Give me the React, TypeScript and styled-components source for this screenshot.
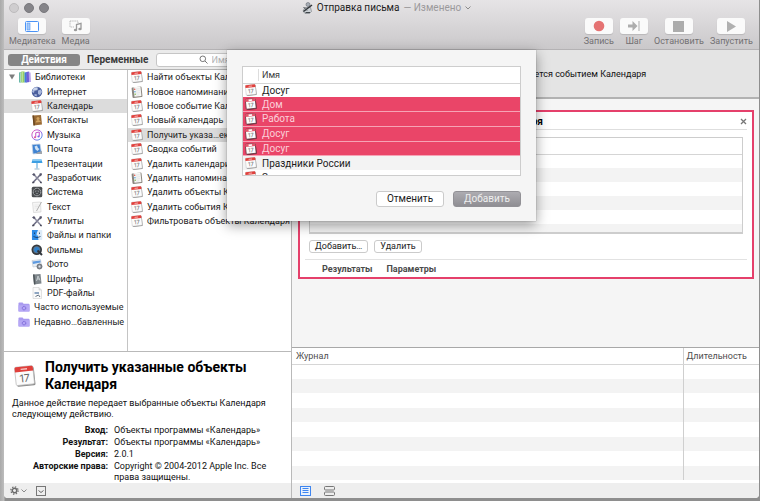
import React from "react";
import styled, { createGlobalStyle, css } from "styled-components";

const GlobalStyle = createGlobalStyle`
  * { box-sizing: border-box; }
  html, body, #root { height: 100%; }
  body {
    margin: 0;
    background: linear-gradient(90deg, #a9a9a9, #bdbdbd 4px, #8e8e8e 5px);
    font-family: Roboto, "Noto Sans", sans-serif;
    font-size: 9px;
    color: #1c1c1c;
    overflow: hidden;
  }
  button, input { font: inherit; color: inherit; }
  button { border: 0; padding: 0; background: none; }
  ul, dl, dd, h1, h2, p { margin: 0; padding: 0; }
  ul { list-style: none; }
  table { border-collapse: collapse; width: 100%; }
  th, td { padding: 0; text-align: left; font-weight: 400; }
  svg { display: block; flex: none; }
`;

const Window = styled.div`
  position: relative;
  display: flex;
  flex-direction: column;
  height: calc(100vh - 3px);
  margin: 0 1px 0 4px;
  overflow: hidden;
  background: #fff;
  border-radius: 0 0 4px 4px;
`;

const Header = styled.header`
  display: flex;
  flex-direction: column;
  height: 50px;
  flex: none;
  background: linear-gradient(#e6e4e6, #cac8ca);
  border-bottom: 1px solid #b4b2b4;
`;

const TitleBar = styled.div`
  display: grid;
  grid-template-columns: 1fr auto 1fr;
  align-items: center;
  height: 15px;
  padding-left: 5px;
`;

const Lights = styled.div`
  display: flex;
  gap: 5px;
`;

const Light = styled.button<{ $dim?: boolean }>`
  width: 10px;
  height: 10px;
  border-radius: 50%;
  background: ${(p) => (p.$dim ? "#cfcdcf" : "#858489")};
  border: 1px solid ${(p) => (p.$dim ? "#bdbbbd" : "#7a797e")};
`;

const Title = styled.h1`
  display: flex;
  align-items: center;
  gap: 4px;
  padding-left: 5px;
  font-size: 10px;
  font-weight: 400;
  line-height: 14px;
  white-space: nowrap;
  span { color: #9b999b; }
`;

const Toolbar = styled.div`
  display: flex;
  justify-content: space-between;
  padding: 3px 6px 0 5px;
`;

const ToolGroup = styled.div`
  display: flex;
  gap: 6px;
`;

const Tool = styled.button`
  display: flex;
  flex-direction: column;
  align-items: center;
  gap: 2px;
  font-size: 9px;
  line-height: 10px;
  color: #727072;
`;

const ToolFace = styled.span`
  display: flex;
  align-items: center;
  justify-content: center;
  width: 28px;
  height: 16px;
  border-radius: 3px;
  background: #fafafa;
  box-shadow: 0 1px 1px rgba(0, 0, 0, 0.12);
`;

const Main = styled.main`
  display: grid;
  grid-template-columns: 288px 1fr;
  flex: 1;
  min-height: 0;
`;

const Side = styled.aside`
  display: flex;
  flex-direction: column;
  min-height: 0;
  min-width: 0;
  border-right: 1px solid #b9b9b9;
`;

const Tabs = styled.div`
  display: flex;
  align-items: center;
  gap: 7px;
  height: 20px;
  padding: 0 4px;
  background: #ebebeb;
  border-bottom: 1px solid #b4b4b4;
`;

const Tab = styled.button<{ $active?: boolean }>`
  height: 12px;
  line-height: 12px;
  font-size: 10px;
  font-weight: 700;
  color: #3a3a3a;
  ${(p) =>
    p.$active &&
    css`
      width: 72px;
      border-radius: 3px;
      background: #868686;
      color: #fff;
    `}
`;

const Search = styled.label`
  display: flex;
  flex: 1;
  align-items: center;
  gap: 4px;
  min-width: 0;
  height: 14px;
  padding-left: 42px;
  background: #fff;
  border: 1px solid #c6c6c6;
  border-radius: 3px;
  input {
    width: 100%;
    min-width: 0;
    border: 0;
    padding: 0;
    background: none;
    outline: 0;
  }
  input::placeholder { color: #b5b5b5; }
`;

const Lists = styled.div`
  display: grid;
  grid-template-columns: 124px 1fr;
  flex: 1;
  min-height: 0;
`;

const List = styled.ul<{ $divider?: boolean }>`
  display: grid;
  grid-template-rows: repeat(18, 1fr);
  min-height: 0;
  min-width: 0;
  padding-bottom: 22px;
  border-right: ${(p) => (p.$divider ? "1px solid #c4c4c4" : "0")};
`;

const Item = styled.button<{ $indent: number; $selected?: boolean }>`
  display: flex;
  align-items: center;
  gap: 4px;
  width: 100%;
  height: 100%;
  padding-left: ${(p) => p.$indent}px;
  background: ${(p) => (p.$selected ? "#dcdcdc" : "none")};
  white-space: nowrap;
  text-align: left;
`;

const Info = styled.section`
  display: flex;
  flex-direction: column;
  gap: 5px;
  padding: 7px 8px 0;
  border-top: 1px solid #b9b9b9;
  line-height: 11px;
  color: #111;
`;

const InfoHead = styled.div`
  display: flex;
  align-items: center;
  gap: 9px;
  padding-left: 2px;
  h2 {
    font-size: 14px;
    line-height: 17px;
    font-weight: 700;
    color: #000;
  }
`;

const Facts = styled.dl`
  display: grid;
  grid-template-columns: 96px 1fr;
  column-gap: 6px;
  row-gap: 1px;
  dt {
    text-align: right;
    font-weight: 700;
    white-space: nowrap;
  }
`;

const BottomBar = styled.footer<{ $wide?: boolean }>`
  display: flex;
  align-items: center;
  gap: ${(p) => (p.$wide ? 13 : 9)}px;
  height: 15px;
  flex: none;
  padding-left: ${(p) => (p.$wide ? 8 : 6)}px;
  background: #eee;
`;

const IconButton = styled.button`
  display: flex;
  align-items: center;
  gap: 2px;
`;

const Work = styled.section`
  display: flex;
  flex-direction: column;
  min-width: 0;
  min-height: 0;
`;

const Trigger = styled.p`
  flex: none;
  height: 49px;
  line-height: 48px;
  text-align: center;
  background: #e4e4e4;
  border-bottom: 2px solid #b2b2b2;
  color: #111;
`;

const Canvas = styled.div`
  flex: 1;
  min-height: 0;
  padding: 11px 5px 0 6px;
  background: #f5f5f5;
`;

const Card = styled.article`
  display: flex;
  flex-direction: column;
  border: 2px solid #e5406b;
  background: #fff;
`;

const CardHead = styled.div`
  display: flex;
  align-items: center;
  gap: 7px;
  height: 18px;
  margin: 0 5px;
  padding: 2px 0 0 8px;
  border-bottom: 1px solid #dedede;
  h2 {
    flex: 1;
    font-size: 10px;
    font-weight: 700;
    color: #000;
  }
`;

const CardTable = styled.div`
  height: 97px;
  margin: 7px 9px 0;
  overflow: hidden;
  border: 1px solid #cdcdcd;
  border-bottom-width: 2px;
  th { height: 16px; border-bottom: 1px solid #d5d5d5; }
  td { height: 14px; }
  tbody tr:nth-child(even) { background: #f3f3f3; }
`;

const CardActions = styled.div`
  display: flex;
  gap: 6px;
  padding: 6px 9px;
`;

const SmallButton = styled.button`
  height: 13px;
  padding: 0 5px;
  line-height: 11px;
  background: #fff;
  border: 1px solid #cbcbcb;
  border-radius: 3px;
`;

const CardTabs = styled.div`
  display: flex;
  gap: 14px;
  height: 18px;
  margin: 0 5px;
  padding-left: 17px;
  border-top: 1px solid #e2e2e2;
  button {
    font-weight: 700;
    color: #4a4a4a;
  }
`;

const Log = styled.div`
  display: flex;
  flex: none;
  height: 136px;
  padding-bottom: 3px;
  border-top: 1px solid #a8a8a8;
  table { height: 100%; }
  th { height: 16px; padding: 0 4px; color: #4e4e4e; border-bottom: 1px solid #d6d6d6; }
  td { height: 14px; }
  th + th, td + td { width: 76px; padding: 0 0 0 3px; border-left: 1px solid #cfcfcf; }
  tbody tr:nth-child(even) { background: #f3f3f3; }
`;

const Sheet = styled.div`
  position: absolute;
  top: 50px;
  left: 0;
  right: 0;
  width: 309px;
  margin: 0 auto;
  padding: 16px 15px 14px;
  background: #f5f5f5;
  box-shadow: 0 4px 12px rgba(0, 0, 0, 0.4), 0 0 1px rgba(0, 0, 0, 0.4);
`;

const Picker = styled.div`
  height: 110px;
  overflow: hidden;
  background: #fff;
  border: 1px solid #cdcdcd;
  table { height: 117px; }
  th { height: 16px; color: #3c3c3c; border-bottom: 1px solid #d5d5d5; }
  th:first-child { width: 16px; }
  th + th { padding-left: 3px; }
  td:first-child { padding-left: 2px; }
  td + td { padding-left: 3px; font-size: 10px; line-height: 13px; }
  th:first-child { background: linear-gradient(#ddd, #ddd) right center / 1px 12px no-repeat; }
`;

const PickRow = styled.tr<{ $selected?: boolean; $striped?: boolean }>`
  background: ${(p) => (p.$selected ? "#ea4568" : p.$striped ? "#f3f3f3" : "#fff")};
  color: ${(p) => (p.$selected ? "#fbd0da" : "#1c1c1c")};
  td { border-bottom: ${(p) => (p.$selected ? "1px solid #f6a3b5" : "0")}; }
`;

const SheetActions = styled.div`
  display: flex;
  justify-content: flex-end;
  gap: 9px;
  padding-top: 15px;
`;

const PushButton = styled.button<{ $primary?: boolean }>`
  width: 68px;
  height: 16px;
  border: 1px solid ${(p) => (p.$primary ? "#929196" : "#cbcbcb")};
  border-radius: 3px;
  background: ${(p) => (p.$primary ? "linear-gradient(#adacb1, #8f8e93)" : "#fff")};
  color: ${(p) => (p.$primary ? "#eee" : "#1c1c1c")};
  font-size: 10px;
  line-height: 14px;
`;

type IconProps = { size?: number; highlighted?: boolean };

const Calendar = ({ size = 12, highlighted }: IconProps) => (
  <svg width={size} height={size} viewBox="0 0 24 24" aria-hidden="true">
    <g transform="rotate(-6 12 12)">
      <rect x="2.5" y="3" width="20" height="20" rx="1.5" fill={highlighted ? "#5e2a36" : "#8d8d8d"} />
      <rect x="1.5" y="1.5" width="20" height="20" rx="1.5" fill="#fcfcfc" stroke={highlighted ? "#6b3340" : "#b9b9b9"} strokeWidth={highlighted ? 1.6 : 0.8} />
      <path d="M1.5 3q0-1.500 1.500-1.500h17q1.500 0 1.500 1.500v4h-20z" fill={highlighted ? "#e2566a" : "#e0403c"} />
      <path d="M8 4.300h7" stroke={highlighted ? "#fff" : "#f7c6c4"} strokeWidth={highlighted ? 3.4 : 1.6} />
      <text x="11.500" y="18.500" textAnchor="middle" fontFamily="Inter" fontSize="11.500" fill="#666">17</text>
    </g>
  </svg>
);

const Reminder = () => (
  <svg width="12" height="12" viewBox="0 0 24 24" aria-hidden="true">
    <g transform="rotate(-6 12 12)">
      <rect x="2" y="2" width="20" height="21" rx="2" fill="#8b867f" />
      <rect x="6" y="2" width="14" height="19" fill="#f7f7f5" />
      <path d="M10 6h8M10 10h8M10 14h8M10 18h6" stroke="#cfd3d6" />
      <circle cx="8" cy="6" r="1.500" fill="#e0524a" />
      <circle cx="8" cy="11" r="1.500" fill="#4f9ad8" />
      <circle cx="8" cy="16" r="1.500" fill="#77b84b" />
    </g>
  </svg>
);

const Books = () => (
  <svg width="12" height="12" viewBox="0 0 26 24" preserveAspectRatio="none" aria-hidden="true">
    <path d="M0 3l5-1v21H0z" fill="#5fb2a5" />
    <path d="M5 1h7v22H5z" fill="#8ccb52" />
    <path d="M12 3l5-1v21h-5z" fill="#3f7fd6" />
    <path d="M16 2l6-1 1 21-7 1z" fill="#6f5fd6" />
    <path d="M21 3h4l1 19h-4z" fill="#b9a5ea" />
    <path d="M3 3v19M8 2v20" stroke="#d6f0c9" strokeWidth="1.500" />
  </svg>
);

const Globe = () => (
  <svg width="12" height="12" viewBox="0 0 24 24" aria-hidden="true">
    <circle cx="12" cy="12" r="10.500" fill="#4b5f9d" />
    <path d="M4 6q5-5 10-3l-3 5-4 1-1 5-4-2zM14 9l6-2 2 5-4 6-4-2zM7 16l5 1-1 4-4-2z" fill="#a9b8dc" />
    <ellipse cx="9" cy="6" rx="5" ry="3" fill="#dfe6f5" opacity=".6" />
  </svg>
);

const Contacts = () => (
  <svg width="12" height="12" viewBox="0 0 24 24" aria-hidden="true">
    <path d="M3 3l17-1 2 19-17 2z" fill="#9a6b35" />
    <path d="M3 3l3 0 2 19.500-3 .5z" fill="#6b4720" />
    <circle cx="14" cy="9" r="3" fill="#d2a25e" />
    <path d="M9 17q1-5 5-5t6 4z" fill="#d2a25e" />
  </svg>
);

const Music = () => (
  <svg width="12" height="12" viewBox="0 0 24 24" aria-hidden="true">
    <defs>
      <linearGradient id="ring" x1="0" y1="0" x2="1" y2="1">
        <stop offset="0" stopColor="#e85ab0" />
        <stop offset=".5" stopColor="#a15be0" />
        <stop offset="1" stopColor="#3fa4f0" />
      </linearGradient>
    </defs>
    <circle cx="12" cy="12" r="10.300" fill="#fff" stroke="url(#ring)" strokeWidth="2" />
    <path d="M9.500 16.500V7.500l7-1.500v9" fill="none" stroke="#c352c9" strokeWidth="2" />
    <ellipse cx="8" cy="16.500" rx="2.200" ry="1.800" fill="#e0569c" />
    <ellipse cx="15" cy="15" rx="2.200" ry="1.800" fill="#7b62e8" />
  </svg>
);

const Mail = () => (
  <svg width="12" height="12" viewBox="0 0 24 24" aria-hidden="true">
    <path d="M2 3l16-1 3 18-17 2z" fill="#3f83d2" stroke="#c9d6e4" strokeWidth="1.500" />
    <path d="M7 7l5-2 2 5 3 2-4 4-4-3z" fill="#cfe2f5" />
    <path d="M12 19l10-3v6H10z" fill="#9fa5ad" />
  </svg>
);

const Keynote = () => (
  <svg width="12" height="12" viewBox="0 0 24 24" aria-hidden="true">
    <path d="M3 3h18l2 7H1z" fill="#3c9fe3" />
    <path d="M3 3h18l1 3H2z" fill="#85c8f2" />
    <path d="M12 10v11" stroke="#4a9ed6" strokeWidth="2" />
    <path d="M7 22h10" stroke="#9cb9cc" strokeWidth="2" />
  </svg>
);

const Tools = () => (
  <svg width="12" height="12" viewBox="0 0 24 24" aria-hidden="true">
    <path d="M4 21L19 5" stroke="#6b6b83" strokeWidth="3" />
    <path d="M5 4l15 17" stroke="#8c8ca0" strokeWidth="3" />
    <path d="M2 5l4-3 3 4-3 2zM17 3l4-1 1 4-4 3z" fill="#55556b" />
    <path d="M2 20l4-1 1 3-4 1zM18 19l4 1-1 3-3-1z" fill="#4b4b5c" />
  </svg>
);

const Gears = () => (
  <svg width="12" height="12" viewBox="0 0 24 24" aria-hidden="true">
    <rect x="1.500" y="1.500" width="21" height="21" rx="3" fill="#4a4d50" />
    <circle cx="12" cy="12" r="7.500" fill="none" stroke="#c2c6c9" strokeWidth="2" strokeDasharray="2 1" />
    <circle cx="12" cy="12" r="4" fill="#878b8f" />
    <path d="M12 12V6M12 12l5 3M12 12l-5 3" stroke="#1f2123" strokeWidth="1.500" />
  </svg>
);

const TextDoc = () => (
  <svg width="12" height="12" viewBox="0 0 24 24" aria-hidden="true">
    <path d="M3 3l16-1 1 20-15 1z" fill="#f6f6f6" stroke="#c4c4c4" />
    <path d="M7 8h9M7 11h9M7 14h6" stroke="#ddd" />
    <path d="M21 2L11 20" stroke="#b0b0b0" strokeWidth="2" />
  </svg>
);

const Finder = () => (
  <svg width="12" height="12" viewBox="0 0 24 24" aria-hidden="true">
    <rect x="1.500" y="2" width="21" height="20" rx="1.500" fill="#dcebf8" />
    <path d="M2 2h12q-3 5-3 11h3q0 5 1 9H2z" fill="#2c8be8" />
    <path d="M7 7v3M17 7v3M5 15q7 5 14 0" fill="none" stroke="#15304f" strokeWidth="1.500" />
  </svg>
);

const QuickTime = () => (
  <svg width="12" height="12" viewBox="0 0 24 24" aria-hidden="true">
    <circle cx="11.500" cy="11.500" r="10.500" fill="#35393e" />
    <circle cx="11.500" cy="11.500" r="6.500" fill="#2e7fc9" stroke="#6b737b" strokeWidth="1.500" />
    <path d="M13 13l9 9" stroke="#30353b" strokeWidth="4" />
  </svg>
);

const Photo = () => (
  <svg width="12" height="12" viewBox="0 0 24 24" aria-hidden="true">
    <path d="M2 5l17-2 2 12-17 3z" fill="#e8eef4" stroke="#b4bcc5" />
    <path d="M3 7l16-2v4L4 12z" fill="#5f9be0" />
    <circle cx="17" cy="17" r="5" fill="#8b9097" stroke="#5a5f66" strokeWidth="1.500" />
    <circle cx="17" cy="17" r="2" fill="#dfe5ec" />
  </svg>
);

const FontBook = () => (
  <svg width="12" height="12" viewBox="0 0 24 24" aria-hidden="true">
    <path d="M4 3l15-1 2 19-15 2z" fill="#7e868b" />
    <path d="M4 3l3 0 2 19.500-3 .5z" fill="#4e5559" />
    <path d="M11 16l3-10 4 9M12 12h5" fill="none" stroke="#d7dde0" strokeWidth="1.500" />
  </svg>
);

const PdfDoc = () => (
  <svg width="12" height="12" viewBox="0 0 24 24" aria-hidden="true">
    <path d="M4 1h12l5 5v17H4z" fill="#fafafa" stroke="#c6c6c6" />
    <path d="M16 1v5h5" fill="#e2e2e2" stroke="#c6c6c6" />
    <rect x="7" y="10" width="9" height="4" fill="#8fa6c2" />
    <path d="M9 19l6-3 3 4" fill="none" stroke="#62707f" strokeWidth="2" />
  </svg>
);

const SmartFolder = () => (
  <svg width="12" height="12" viewBox="0 0 26 24" aria-hidden="true">
    <path d="M1 4q0-2 2-2h7l2 3h11q2 0 2 2v13q0 2-2 2H3q-2 0-2-2z" fill="#a99af0" />
    <path d="M1 8h24v12q0 2-2 2H3q-2 0-2-2z" fill="#b6a8f5" />
    <circle cx="13" cy="14.500" r="3.800" fill="none" stroke="#8472dc" strokeWidth="2.500" strokeDasharray="2 .8" />
  </svg>
);

const Disclosure = () => (
  <svg width="6" height="6" viewBox="0 0 7 6" aria-hidden="true">
    <path d="M0 0h7L3.500 6z" fill="#7d7d7d" />
  </svg>
);

const Chevron = () => (
  <svg width="6" height="4" viewBox="0 0 6 4" aria-hidden="true">
    <path d="M.5.5L3 3 5.500.5" fill="none" stroke="#8b8b8b" />
  </svg>
);

const Robot = () => (
  <svg width="11" height="12" viewBox="0 0 22 24" aria-hidden="true">
    <circle cx="12" cy="5" r="4" fill="#a7adb5" stroke="#555b62" />
    <path d="M6 11h11l2 8-4 4H6l-4-5z" fill="#ccd1d6" stroke="#60666d" />
    <path d="M3 19L20 6" stroke="#2f3337" strokeWidth="3" />
    <path d="M3 10l7 7M7 21h9" stroke="#42474c" strokeWidth="2" />
  </svg>
);

const library: [string, React.ComponentType][] = [
  ["Интернет", Globe],
  ["Календарь", Calendar],
  ["Контакты", Contacts],
  ["Музыка", Music],
  ["Почта", Mail],
  ["Презентации", Keynote],
  ["Разработчик", Tools],
  ["Система", Gears],
  ["Текст", TextDoc],
  ["Утилиты", Tools],
  ["Файлы и папки", Finder],
  ["Фильмы", QuickTime],
  ["Фото", Photo],
  ["Шрифты", FontBook],
  ["PDF-файлы", PdfDoc],
];

const actions: [string, React.ComponentType][] = [
  ["Найти объекты Календаря", Calendar],
  ["Новое напоминание", Reminder],
  ["Новое событие Календаря", Calendar],
  ["Новый календарь", Calendar],
  ["Получить указа…екты Календаря", Calendar],
  ["Сводка событий", Calendar],
  ["Удалить календари", Calendar],
  ["Удалить напоминания", Reminder],
  ["Удалить объекты Календаря", Calendar],
  ["Удалить события Календаря", Calendar],
  ["Фильтровать объекты Календаря", Calendar],
];

const calendars = [
  { name: "Досуг" },
  { name: "Дом", selected: true },
  { name: "Работа", selected: true },
  { name: "Досуг", selected: true },
  { name: "Досуг", selected: true },
  { name: "Праздники России" },
  { name: "Здоровье" },
];

const facts = [
  ["Вход:", "Объекты программы «Календарь»"],
  ["Результат:", "Объекты программы «Календарь»"],
  ["Версия:", "2.0.1"],
  ["Авторские права:", "Copyright © 2004-2012 Apple Inc. Все права защищены."],
];

const Sidebar = () => (
  <Side>
    <Tabs>
      <Tab $active>Действия</Tab>
      <Tab>Переменные</Tab>
      <Search>
        <svg width="9" height="9" viewBox="0 0 9 9" aria-hidden="true">
          <circle cx="3.800" cy="3.800" r="2.800" fill="none" stroke="#777" />
          <path d="M6 6l2.500 2.500" stroke="#777" />
        </svg>
        <input type="text" placeholder="Имя" aria-label="Поиск по имени" />
      </Search>
    </Tabs>
    <Lists>
      <List $divider>
        <li>
          <Item $indent={5}>
            <Disclosure />
            <Books />
            Библиотеки
          </Item>
        </li>
        {library.map(([name, Icon]) => (
          <li key={name}>
            <Item $indent={27} $selected={name === "Календарь"}>
              <Icon />
              {name}
            </Item>
          </li>
        ))}
        {["Часто используемые", "Недавно…бавленные"].map((name) => (
          <li key={name}>
            <Item $indent={14}>
              <SmartFolder />
              {name}
            </Item>
          </li>
        ))}
      </List>
      <List>
        {actions.map(([name, Icon], i) => (
          <li key={name}>
            <Item $indent={3} $selected={i === 4}>
              <Icon />
              {name}
            </Item>
          </li>
        ))}
      </List>
    </Lists>
    <Info>
      <InfoHead>
        <Calendar size={22} />
        <h2>Получить указанные объекты Календаря</h2>
      </InfoHead>
      <p>Данное действие передает выбранные объекты Календаря следующему действию.</p>
      <Facts>
        {facts.map(([term, value]) => (
          <React.Fragment key={term}>
            <dt>{term}</dt>
            <dd>{value}</dd>
          </React.Fragment>
        ))}
      </Facts>
    </Info>
    <BottomBar>
      <IconButton aria-label="Настройки">
        <svg width="9" height="9" viewBox="0 0 18 18" aria-hidden="true">
          <circle cx="9" cy="9" r="4.500" fill="none" stroke="#6b6b6b" strokeWidth="3" />
          <circle cx="9" cy="9" r="7.300" fill="none" stroke="#6b6b6b" strokeWidth="2.500" strokeDasharray="2.800 2.930" />
        </svg>
        <Chevron />
      </IconButton>
      <IconButton aria-label="Скрыть описание">
        <svg width="10" height="10" viewBox="0 0 10 10" aria-hidden="true">
          <rect x=".5" y=".5" width="9" height="9" fill="none" stroke="#777" />
          <path d="M2.500 4.500L5 6.500 7.500 4.500" fill="none" stroke="#666" />
        </svg>
      </IconButton>
    </BottomBar>
  </Side>
);

const Workflow = () => (
  <Work>
    <Trigger>Этот рабочий процесс запускается событием Календаря</Trigger>
    <Canvas>
      <Card>
        <CardHead>
          <Disclosure />
          <Calendar />
          <h2>Получить указанные объекты Календаря</h2>
          <IconButton aria-label="Закрыть">
            <svg width="7" height="7" viewBox="0 0 7 7" aria-hidden="true">
              <path d="M1 1l5 5M6 1L1 6" stroke="#777" strokeWidth="1.300" />
            </svg>
          </IconButton>
        </CardHead>
        <CardTable>
          <table aria-label="Объекты">
            <thead>
              <tr><th /></tr>
            </thead>
            <tbody>
              {Array.from({ length: 6 }, (_, i) => (
                <tr key={i}><td /></tr>
              ))}
            </tbody>
          </table>
        </CardTable>
        <CardActions>
          <SmallButton>Добавить…</SmallButton>
          <SmallButton>Удалить</SmallButton>
        </CardActions>
        <CardTabs>
          <button>Результаты</button>
          <button>Параметры</button>
        </CardTabs>
      </Card>
    </Canvas>
    <Log>
      <table>
        <thead>
          <tr>
            <th>Журнал</th>
            <th>Длительность</th>
          </tr>
        </thead>
        <tbody>
          {Array.from({ length: 8 }, (_, i) => (
            <tr key={i}><td /><td /></tr>
          ))}
        </tbody>
      </table>
    </Log>
    <BottomBar $wide>
      <IconButton aria-label="Журнал">
        <svg width="11" height="10" viewBox="0 0 11 10" aria-hidden="true">
          <rect x=".5" y=".5" width="10" height="9" fill="#eaf2fd" stroke="#3f86f0" />
          <path d="M2.500 2.500h6M2.500 4.500h6M2.500 6.500h6" stroke="#3f86f0" />
        </svg>
      </IconButton>
      <IconButton aria-label="Переменные">
        <svg width="11" height="10" viewBox="0 0 11 10" aria-hidden="true">
          <rect x=".5" y=".5" width="10" height="3.500" rx="1" fill="none" stroke="#777" />
          <rect x=".5" y="6" width="10" height="3.500" rx="1" fill="none" stroke="#777" />
        </svg>
      </IconButton>
    </BottomBar>
  </Work>
);

const CalendarSheet = () => (
  <Sheet role="dialog" aria-label="Выбор календарей">
    <Picker>
      <table>
        <thead>
          <tr>
            <th />
            <th>Имя</th>
          </tr>
        </thead>
        <tbody>
          {calendars.map((c, i) => (
            <PickRow key={i} $selected={c.selected} $striped={i % 2 === 1}>
              <td><Calendar highlighted={c.selected} /></td>
              <td>{c.name}</td>
            </PickRow>
          ))}
        </tbody>
      </table>
    </Picker>
    <SheetActions>
      <PushButton>Отменить</PushButton>
      <PushButton $primary>Добавить</PushButton>
    </SheetActions>
  </Sheet>
);

export default function App() {
  return (
    <>
      <GlobalStyle />
      <Window>
        <Header>
          <TitleBar>
            <Lights>
              <Light $dim aria-label="Закрыть окно" />
              <Light aria-label="Свернуть" />
              <Light aria-label="Развернуть" />
            </Lights>
            <Title>
              <Robot />
              Отправка письма
              <span>— Изменено</span>
              <Chevron />
            </Title>
          </TitleBar>
          <Toolbar>
            <ToolGroup>
              <Tool>
                <ToolFace>
                  <svg width="14" height="11" viewBox="0 0 14 11" aria-hidden="true">
                    <rect x=".5" y=".5" width="13" height="10" rx="1" fill="#fff" stroke="#4a92f5" />
                    <rect x="2" y="2" width="3" height="7" fill="#a5caf9" stroke="#4a92f5" strokeWidth=".6" />
                  </svg>
                </ToolFace>
                Медиатека
              </Tool>
              <Tool>
                <ToolFace>
                  <svg width="14" height="12" viewBox="0 0 14 12" aria-hidden="true">
                    <path d="M1 1h8v2M1 1v6h4" fill="none" stroke="#bbb" strokeDasharray="1.500 .7" />
                    <path d="M7.500 9.500V4.500L12 3.300V8.500" fill="none" stroke="#9a9a9a" strokeWidth="1.300" />
                    <ellipse cx="6.500" cy="10" rx="1.700" ry="1.300" fill="#9a9a9a" />
                    <ellipse cx="11" cy="9" rx="1.700" ry="1.300" fill="#9a9a9a" />
                  </svg>
                </ToolFace>
                Медиа
              </Tool>
            </ToolGroup>
            <ToolGroup>
              <Tool>
                <ToolFace>
                  <svg width="12" height="12" viewBox="0 0 12 12" aria-hidden="true">
                    <circle cx="6" cy="6" r="5.300" fill="#e57373" />
                  </svg>
                </ToolFace>
                Запись
              </Tool>
              <Tool>
                <ToolFace>
                  <svg width="12" height="12" viewBox="0 0 12 12" aria-hidden="true">
                    <path d="M0 4.500h4.500V1L9.500 6l-5 5V7.500H0z" fill="#adadad" />
                    <path d="M11 1v10" stroke="#adadad" />
                  </svg>
                </ToolFace>
                Шаг
              </Tool>
              <Tool>
                <ToolFace>
                  <svg width="11" height="11" viewBox="0 0 11 11" aria-hidden="true">
                    <rect width="11" height="11" fill="#acacac" />
                  </svg>
                </ToolFace>
                Остановить
              </Tool>
              <Tool>
                <ToolFace>
                  <svg width="10" height="11" viewBox="0 0 10 11" aria-hidden="true">
                    <path d="M1 0l9 5.500L1 11z" fill="#b0b0b0" />
                  </svg>
                </ToolFace>
                Запустить
              </Tool>
            </ToolGroup>
          </Toolbar>
        </Header>
        <Main>
          <Sidebar />
          <Workflow />
        </Main>
        <CalendarSheet />
      </Window>
    </>
  );
}
